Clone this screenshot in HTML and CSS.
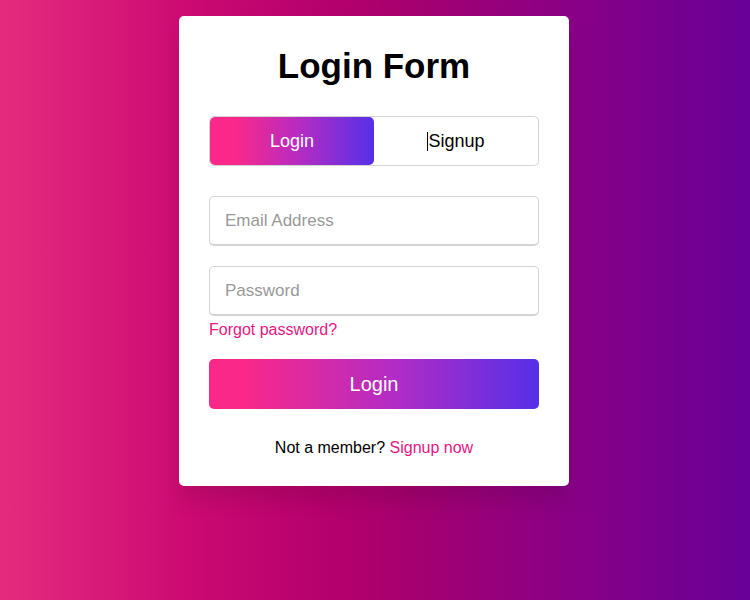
FILE: index.html
```html
<!DOCTYPE html>
<html lang="en">
<head>
    <meta charset="UTF-8">
    <meta name="viewport" content="width=device-width, initial-scale=1.0">
    <title>Login Form</title>
    <link rel="stylesheet" href="styles.css">
</head>
<body>
    <div class="wrapper">
        <h1 class="title">Login Form</h1>

        <div class="slide-controls">
            <div class="slide-tab active">Login</div>
            <div class="slide-tab"><span class="caret"></span>Signup</div>
        </div>

        <form class="login-form">
            <div class="field">
                <input type="text" placeholder="Email Address">
            </div>
            <div class="field field-pass">
                <input type="password" placeholder="Password">
            </div>
            <div class="pass-link"><a href="#">Forgot password?</a></div>
            <button type="button" class="btn">Login</button>
            <div class="signup-link">Not a member? <a href="#">Signup now</a></div>
        </form>
    </div>
</body>
</html>
```

FILE: styles.css
```css
* {
    box-sizing: border-box;
}

html, body {
    height: 100%;
}

body {
    margin: 0;
    font-family: "Liberation Sans", Arial, sans-serif;
    display: flex;
    justify-content: center;
    align-items: flex-start;
    padding-top: 16px;
    padding-right: 2px;
    background: linear-gradient(to right, #e42c7e 0%, #cc0a72 25%, #b3006c 45%, #a4006f 55%, #8a0084 75%, #680097 100%);
}

.wrapper {
    width: 390px;
    background: #fff;
    border-radius: 5px;
    padding: 30px 30px 29px;
    box-shadow: 0 15px 20px rgba(0, 0, 0, 0.1);
}

.title {
    margin: 0;
    font-size: 35px;
    line-height: 40px;
    font-weight: bold;
    text-align: center;
    color: #000;
}

.slide-controls {
    display: flex;
    height: 50px;
    margin-top: 30px;
    border: 1px solid lightgrey;
    border-radius: 5px;
    overflow: hidden;
}

.slide-tab {
    flex: 1;
    display: flex;
    align-items: center;
    justify-content: center;
    font-size: 18px;
    color: #000;
}

.slide-tab.active {
    color: #fff;
    border-radius: 5px;
    background: linear-gradient(to right, #fa2888 15%, #b42cc3 55%, #5530e8 100%);
}

.caret {
    display: inline-block;
    width: 1px;
    height: 19px;
    background: #000;
}

.login-form {
    margin-top: 30px;
}

.field {
    height: 50px;
}

.field-pass {
    margin-top: 20px;
}

.field input {
    width: 100%;
    height: 100%;
    outline: none;
    padding-left: 15px;
    border: 1px solid lightgrey;
    border-bottom-width: 2px;
    border-radius: 5px;
    font-size: 17px;
    font-family: inherit;
}

.field input::placeholder {
    color: #999;
}

.pass-link {
    margin-top: 5px;
    font-size: 16px;
    line-height: 18px;
}

a {
    color: #e8167f;
    text-decoration: none;
}

.btn {
    display: block;
    width: 100%;
    height: 50px;
    margin-top: 20px;
    border: none;
    border-radius: 5px;
    color: #fff;
    font-size: 20px;
    font-family: inherit;
    background: linear-gradient(to right, #fa2888 10%, #b42cc3 55%, #5530e8 100%);
    cursor: pointer;
}

.signup-link {
    margin-top: 30px;
    text-align: center;
    font-size: 16px;
    line-height: 18px;
    color: #000;
}
```
